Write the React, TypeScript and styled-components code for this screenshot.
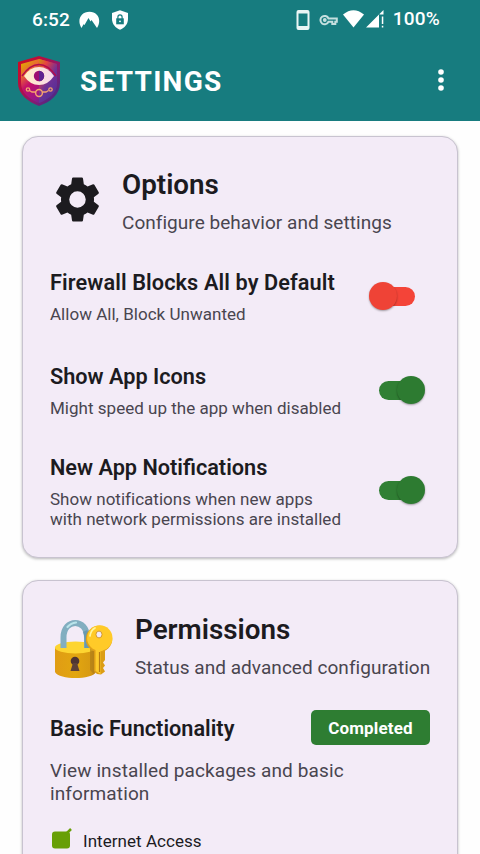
import React from "react";
import styled, { createGlobalStyle } from "styled-components";

const GlobalStyle = createGlobalStyle`
  * { box-sizing: border-box; }
  html, body { margin: 0; padding: 0; background: #fff; }
  body { font-family: Roboto, sans-serif; color: #1c1b1f; overflow: hidden; }
  svg { display: block; flex: none; }
`;

const Screen = styled.div`
  width: 480px;
  height: 854px;
  overflow: hidden;
  background: #fefefe;
`;

const Top = styled.header`
  height: 121px;
  background: #177c7f;
  color: #fff;
`;

const StatusBar = styled.div`
  height: 40px;
  padding: 0 40px 0 32px;
  display: flex;
  align-items: center;
  font-size: 19px;
  font-weight: 500;
  line-height: 40px;
`;

const Clock = styled.span`
  width: 46px;
  letter-spacing: 0.1px;
`;

const StatusGroup = styled.div<{ $gap: number; $end?: boolean }>`
  display: flex;
  align-items: center;
  gap: ${(p) => p.$gap}px;
  margin-left: ${(p) => (p.$end ? "auto" : "0")};
`;

const Battery = styled.span`
  margin-left: 8px;
  letter-spacing: 0.2px;
  line-height: 38px;
  height: 40px;
`;

const AppBar = styled.div`
  height: 81px;
  padding: 0 35px 0 16px;
  display: flex;
  align-items: center;
`;

const AppTitle = styled.h1`
  margin: 2px auto 0 17px;
  font-size: 28px;
  line-height: 34px;
  font-weight: 700;
  letter-spacing: 1.25px;
`;

const MenuButton = styled.button`
  padding: 0 0 2px;
  border: 0;
  background: none;
`;

const Cards = styled.main`
  padding: 15px 22px 0;
  display: flex;
  flex-direction: column;
  gap: 22px;
`;

const Card = styled.section<{ $height: number; $top: number }>`
  height: ${(p) => p.$height}px;
  flex: none;
  padding: ${(p) => p.$top}px 27px 0;
  border: 1px solid #c8c3d0;
  border-radius: 16px;
  background: #f3ebf7;
  box-shadow: 0 1px 3px rgba(0, 0, 0, 0.28);
`;

const CardHeader = styled.div<{ $gap: number; $inset?: number }>`
  display: flex;
  align-items: flex-start;
  gap: ${(p) => p.$gap}px;
  padding-left: ${(p) => p.$inset ?? 0}px;
  height: 66px;
`;

const IconSlot = styled.div<{ $top: number }>`
  padding-top: ${(p) => p.$top}px;
`;

const Heading = styled.h2`
  margin: 0 0 10px;
  font-size: 27.8px;
  line-height: 32px;
  font-weight: 600;
  white-space: nowrap;
`;

const Lead = styled.p`
  margin: 0;
  font-size: 19px;
  line-height: 24px;
  letter-spacing: 0.04px;
  color: #49454f;
  white-space: nowrap;
`;

const Row = styled.div<{ $top: number }>`
  margin-top: ${(p) => p.$top}px;
  display: flex;
  justify-content: space-between;
  align-items: center;
`;

const RowTitle = styled.h3<{ $spacing?: number; $drop?: number }>`
  margin: 0;
  padding-top: ${(p) => p.$drop ?? 0}px;
  font-size: 21.7px;
  line-height: 26px;
  font-weight: 600;
  letter-spacing: ${(p) => p.$spacing ?? 0}px;
  white-space: nowrap;
`;

const RowText = styled.p`
  margin: 8px 0 0;
  font-size: 17px;
  line-height: 20px;
  letter-spacing: 0.02px;
  color: #49454f;
  white-space: nowrap;
`;

const Switch = styled.div<{ $on: boolean; $lift: number }>`
  width: 46px;
  height: 28px;
  margin-right: ${(p) => (p.$on ? 5 : 15)}px;
  margin-bottom: ${(p) => p.$lift}px;
  display: flex;
  flex-direction: ${(p) => (p.$on ? "row" : "row-reverse")};
  align-items: center;
`;

const Groove = styled.div<{ $on: boolean }>`
  width: 34px;
  height: 19px;
  flex: none;
  border-radius: 10px;
  background: ${(p) => (p.$on ? "#307f34" : "#f44438")};
  margin: ${(p) => (p.$on ? "0 -16px 0 0" : "0 0 0 -16px")};
`;

const Thumb = styled.div<{ $on: boolean }>`
  width: 28px;
  height: 28px;
  flex: none;
  z-index: 1;
  border-radius: 50%;
  background: ${(p) => (p.$on ? "#2d7b31" : "#ef4336")};
  box-shadow: 0 1px 2px rgba(0, 0, 0, 0.35);
`;

const Badge = styled.button`
  width: 119px;
  height: 35px;
  padding: 0;
  border: 0;
  border-radius: 5px;
  background: #2e7d32;
  color: #fff;
  font: 700 17px/36px Roboto, sans-serif;
  letter-spacing: 0.15px;
`;

const Description = styled(Lead)`
  margin-top: 14px;
  line-height: 23px;
  letter-spacing: 0.12px;
  white-space: normal;
`;

const CheckLine = styled.div`
  margin-top: 22px;
  display: flex;
  align-items: flex-start;
  gap: 10px;
  font-size: 17px;
  line-height: 28px;
  letter-spacing: 0.04px;
`;

function Toggle({ on, lift = 1 }: { on: boolean; lift?: number }) {
  return (
    <Switch $on={on} $lift={lift} role="switch" aria-checked={on}>
      <Groove $on={on} />
      <Thumb $on={on} />
    </Switch>
  );
}

function Logo() {
  return (
    <svg width="47" height="52" viewBox="0 0 47 52">
      <defs>
        <linearGradient id="rim" x1="0" y1="0" x2="1" y2="0.9">
          <stop offset="0" stopColor="#d5081d" />
          <stop offset="0.35" stopColor="#b50e43" />
          <stop offset="0.65" stopColor="#8a1a70" />
          <stop offset="1" stopColor="#34308c" />
        </linearGradient>
        <linearGradient id="face" x1="0.15" y1="0" x2="0.85" y2="1">
          <stop offset="0" stopColor="#e0a800" />
          <stop offset="0.2" stopColor="#e96a32" />
          <stop offset="0.42" stopColor="#c50f69" />
          <stop offset="0.7" stopColor="#9b1785" />
          <stop offset="1" stopColor="#3f3096" />
        </linearGradient>
        <linearGradient id="faceRight" x1="0" y1="0" x2="0.7" y2="1">
          <stop offset="0" stopColor="#c99a08" />
          <stop offset="0.25" stopColor="#ea453f" />
          <stop offset="0.6" stopColor="#653699" />
          <stop offset="1" stopColor="#503098" />
        </linearGradient>
        <linearGradient id="eyeWhite">
          <stop offset="0" stopColor="#fff0c4" />
          <stop offset="1" stopColor="#f8d7ee" />
        </linearGradient>
      </defs>
      <path d="M23 1 44 7v21c0 12-10 19-21 23C12 47 2 39 2 28V7Z" fill="url(#rim)" />
      <path d="M23 4 41 9v19c0 10-8 16-18 20C13 44 5 38 5 28V9Z" fill="url(#face)" />
      <path d="M23 4 41 9v19c0 10-8 16-18 20Z" fill="url(#faceRight)" opacity="0.85" />
      <path d="M6 21Q14 9.500 23 9.500T40 21" fill="none" stroke="#b40b4b" strokeWidth="1.600" />
      <path d="M8 21q6-9 15-9t15 9q-6 9-15 9T8 21Z" fill="url(#eyeWhite)" />
      <circle cx="23" cy="21" r="5.200" fill="#9c0d72" />
      <path d="M23 15.800a5.200 5.200 0 0 1 0 10.400Z" fill="#5f2390" />
      <g fill="none" stroke="#f5a36c" strokeWidth="1.300">
        <path d="M13.500 35.500 16 37h3.500M26.500 37H30l2.500-1.500" />
        <circle cx="12" cy="34.500" r="1.700" />
        <circle cx="34.500" cy="34.500" r="1.700" />
        <circle cx="23" cy="38" r="3.400" strokeWidth="1.500" />
      </g>
    </svg>
  );
}

function LockAndKey() {
  return (
    <svg width="60" height="60" viewBox="0 0 60 60">
      <defs>
        <linearGradient id="bodyGold" x1="0" y1="0" x2="1" y2="0">
          <stop offset="0" stopColor="#e09c14" />
          <stop offset="0.5" stopColor="#e2a610" />
          <stop offset="0.85" stopColor="#d89b12" />
          <stop offset="1" stopColor="#bc8216" />
        </linearGradient>
      </defs>
      <path d="M1 29v24c4 8 37 8 41 0V29Z" fill="url(#bodyGold)" />
      <ellipse cx="21.500" cy="28.500" rx="20.500" ry="6" fill="#fdd531" />
      <path d="M9.500 29V18.500C9.500 -1 33 -1 33 18.500V29" fill="none" stroke="#82aec0" strokeWidth="6" />
      <path d="M13.500 8Q17 4 22 3.500" fill="none" stroke="#b9e4ea" strokeWidth="2.200" strokeLinecap="round" />
      <path d="M33 29V20q0-4-2-8" fill="none" stroke="#5689a0" strokeWidth="5" opacity="0.55" />
      <path d="m36 29v22l4 4V29Z" fill="#ad7c18" opacity="0.65" />
      <circle cx="21" cy="42" r="4.300" fill="#4e3433" />
      <path d="m19 44-2.500 8h9L23 44Z" fill="#5e4037" />
      <path d="M40 29v23l3 3 4 .5 4-3-2-3.500 2-2.500-2-3 2-2.500V29Z" fill="#dc9d14" />
      <circle cx="45" cy="20" r="13.200" fill="#e0a019" />
      <circle cx="45.800" cy="19" r="12.700" fill="#ffca28" />
      <path d="M41.500 30v22l5 3V32h2v-2Z" fill="#fdca2b" />
      <path d="M45.500 33v20" stroke="#b77b14" strokeWidth="1.200" />
      <ellipse cx="45" cy="15.500" rx="3" ry="3.400" fill="#f3ebf7" stroke="#c88919" strokeWidth="0.800" />
      <path d="M36 17q1-6 5-8" fill="none" stroke="#fff59d" strokeWidth="1.700" strokeLinecap="round" />
    </svg>
  );
}

export default function App() {
  return (
    <>
      <GlobalStyle />
      <Screen>
        <Top>
          <StatusBar>
            <Clock>6:52</Clock>
            <StatusGroup $gap={12}>
              <svg width="22" height="18" viewBox="0 0 22 18">
                <path
                  d="M3.500 17C-1.500 9 3 .8 11.500 .8S24 9 19 17l-5.500-8-1 1.500L10.500 7 6.500 14l-1-.8Z"
                  fill="#fff"
                />
              </svg>
              <svg width="17" height="20" viewBox="0 0 17 20">
                <path d="M8 0.300 16 3v6c0 5-3.500 9-8 10.700C3.500 18 0 14 0 9V3Z" fill="#fff" />
                <path d="M4.200 8.300h7.600v6H4.200z" fill="#177c7f" />
                <path d="M5.900 9V7a2.100 2.100 0 0 1 4.200 0v2" fill="none" stroke="#177c7f" strokeWidth="1.200" />
                <circle cx="8" cy="11.300" r="0.900" fill="#fff" />
              </svg>
            </StatusGroup>
            <StatusGroup $gap={0} $end>
              <svg width="14" height="20" viewBox="0 0 14 20">
                <path
                  fillRule="evenodd"
                  d="M2.500 0h9a2 2 0 0 1 2 2v16a2 2 0 0 1-2 2h-9a2 2 0 0 1-2-2V2a2 2 0 0 1 2-2Zm0 3.500v12.500h9V3.500Z"
                  fill="#eaf5f5"
                />
              </svg>
              <svg width="33" height="20" viewBox="0 0 33 20">
                <g fill="none" stroke="#c5dfdf" strokeWidth="2">
                  <path d="M18.500 8.500h8.300v3.200h-1.500V14h-3v-2.300h-3.800A4.200 4.200 0 1 1 18.500 8.500Z" />
                  <circle cx="14.800" cy="10" r="0.900" />
                </g>
              </svg>
              <svg width="42" height="20" viewBox="0 0 42 20">
                <path d="M0 4.500q10.500-8.500 21 0L10.500 17.500Z" fill="#fff" />
                <path d="M23 17.500 36 4.500v13ZM36.500 4 40.500 0V4.500h-4ZM38.800 6.500h1.500v7.500h-1.500ZM38.800 15.800h1.500v1.700h-1.500Z" fill="#fff" />
              </svg>
              <Battery>100%</Battery>
            </StatusGroup>
          </StatusBar>
          <AppBar>
            <Logo />
            <AppTitle>SETTINGS</AppTitle>
            <MenuButton aria-label="More options">
              <svg width="8" height="24" viewBox="0 0 8 24" fill="#fff">
                <circle cx="4" cy="4" r="2.800" />
                <circle cx="4" cy="12" r="2.800" />
                <circle cx="4" cy="20" r="2.800" />
              </svg>
            </MenuButton>
          </AppBar>
        </Top>

        <Cards>
          <Card $height={422} $top={32}>
            <CardHeader $gap={17}>
              <IconSlot $top={3}>
                <svg width="55" height="55" viewBox="0 0 24 24">
                  <path
                    fill="#1c1b1f"
                    d="M19.140 12.940c.04-.3.060-.61.060-.94s-.02-.64-.07-.94l2.030-1.580c.18-.14.230-.41.120-.61l-1.920-3.320c-.12-.22-.37-.29-.59-.22l-2.390.96c-.5-.38-1.030-.7-1.620-.94L14.400 2.810c-.04-.24-.24-.41-.48-.41h-3.840c-.24 0-.43.170-.47.410l-.36 2.540c-.59.240-1.130.570-1.620.940l-2.390-.96c-.22-.08-.47 0-.59.220L2.740 8.870c-.12.210-.08.470.120.610l2.030 1.580c-.05.3-.09.630-.09.940s.02.640.070.940l-2.030 1.580c-.18.140-.23.410-.12.610l1.920 3.320c.12.220.370.290.590.220l2.390-.96c.5.380 1.030.7 1.620.940l.36 2.540c.05.240.240.410.480.410h3.840c.24 0 .44-.17.470-.41l.36-2.540c.59-.24 1.130-.56 1.620-.94l2.390.960c.22.080.470 0 .59-.22l1.920-3.320c.12-.22.070-.47-.12-.61ZM12 15.600A3.600 3.600 0 1 1 12 8.400a3.600 3.600 0 0 1 0 7.200Z"
                  />
                </svg>
              </IconSlot>
              <div>
                <Heading>Options</Heading>
                <Lead>Configure behavior and settings</Lead>
              </div>
            </CardHeader>
            <Row $top={35}>
              <div>
                <RowTitle $spacing={0.11}>Firewall Blocks All by Default</RowTitle>
                <RowText>Allow All, Block Unwanted</RowText>
              </div>
              <Toggle on={false} lift={2} />
            </Row>
            <Row $top={40}>
              <div>
                <RowTitle>Show App Icons</RowTitle>
                <RowText>Might speed up the app when disabled</RowText>
              </div>
              <Toggle on lift={2} />
            </Row>
            <Row $top={37}>
              <div>
                <RowTitle>New App Notifications</RowTitle>
                <RowText>
                  Show notifications when new apps
                  <br />
                  with network permissions are installed
                </RowText>
              </div>
              <Toggle on lift={4} />
            </Row>
          </Card>

          <Card $height={420} $top={33}>
            <CardHeader $gap={21} $inset={4}>
              <IconSlot $top={5}>
                <LockAndKey />
              </IconSlot>
              <div>
                <Heading>Permissions</Heading>
                <Lead>Status and advanced configuration</Lead>
              </div>
            </CardHeader>
            <Row $top={30}>
              <RowTitle $drop={2}>Basic Functionality</RowTitle>
              <Badge>Completed</Badge>
            </Row>
            <Description>
              View installed packages and basic
              <br />
              information
            </Description>
            <CheckLine>
              <svg width="23" height="24" viewBox="0 0 23 24">
                <rect x="2" y="4.500" width="18" height="17" rx="3" fill="#689f06" />
                <path d="m16 7 5-5" stroke="#689f06" strokeWidth="2.500" />
              </svg>
              Internet Access
            </CheckLine>
          </Card>
        </Cards>
      </Screen>
    </>
  );
}
